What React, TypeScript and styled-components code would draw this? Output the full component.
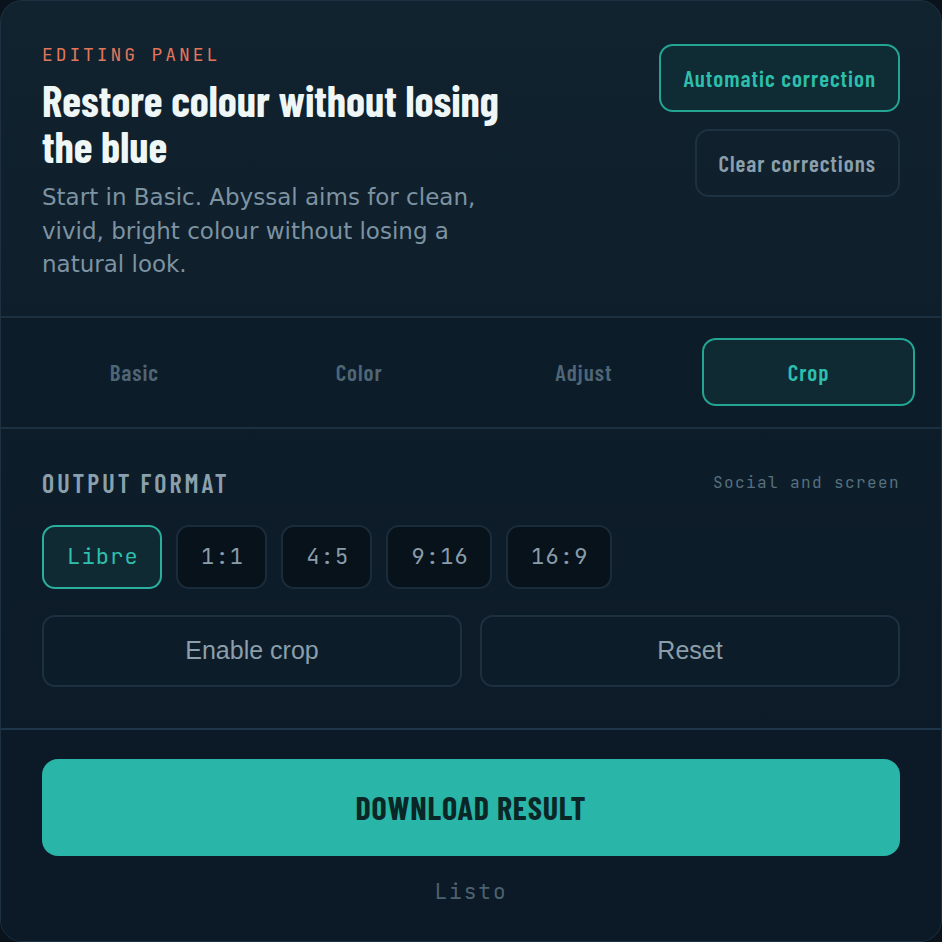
import React, { useState } from 'react';
import styled, { createGlobalStyle } from 'styled-components';

const GlobalStyle = createGlobalStyle`
  html, body {
    margin: 0;
    padding: 0;
    background: #0a121b;
  }
  * { box-sizing: border-box; }
`;

const condensed = `"Barlow Condensed", "Roboto", sans-serif`;
const mono = `"JetBrains Mono", "DejaVu Sans Mono", monospace`;

const Panel = styled.div`
  width: 942px;
  min-height: 942px;
  border: 1px solid #1e3142;
  border-radius: 22px;
  overflow: hidden;
  background: linear-gradient(180deg, #11232f 0%, #0e1d2a 40%, #0c1a27 100%);
  display: flex;
  flex-direction: column;
`;

const Header = styled.header`
  display: flex;
  justify-content: space-between;
  align-items: flex-start;
  padding: 42px 41px 34px 41px;
  border-bottom: 2px solid #1b3141;
`;

const Intro = styled.div`
  max-width: 468px;
  display: flex;
  flex-direction: column;
`;

const Eyebrow = styled.div`
  font-family: ${mono};
  font-size: 18px;
  letter-spacing: 2.9px;
  color: #e2765c;
  text-transform: uppercase;
`;

const Title = styled.h1`
  margin: 11px 0 0 0;
  font-family: ${condensed};
  font-weight: 700;
  font-size: 43px;
  line-height: 46px;
  color: #eef6f6;
`;

const Lead = styled.p`
  margin: 12px 0 0 0;
  font-family: "DejaVu Sans", "Noto Sans", sans-serif;
  font-size: 23px;
  line-height: 33.5px;
  color: #7d93a2;
`;

const Actions = styled.div`
  display: flex;
  flex-direction: column;
  align-items: flex-end;
  gap: 17px;
  padding-top: 1px;
`;

const GhostButton = styled.button<{ $accent?: boolean }>`
  height: 68px;
  padding: 0 22px;
  border-radius: 14px;
  font-family: ${condensed};
  font-weight: 600;
  font-size: 23px;
  letter-spacing: 1px;
  cursor: pointer;
  border: 2px solid ${(p) => (p.$accent ? '#24a493' : '#1d3141')};
  background: ${(p) => (p.$accent ? '#0f2c35' : 'transparent')};
  color: ${(p) => (p.$accent ? '#2dbfac' : '#8a9fab')};
`;

const Tabs = styled.nav`
  display: grid;
  grid-template-columns: repeat(4, 1fr);
  gap: 12px;
  padding: 20px 26px 21px 27px;
  border-bottom: 2px solid #1b3141;
  background: #0d1c29;
`;

const Tab = styled.button<{ $active?: boolean }>`
  height: 68px;
  border-radius: 14px;
  font-family: ${condensed};
  font-weight: 600;
  font-size: 23px;
  letter-spacing: 1px;
  cursor: pointer;
  border: 2px solid ${(p) => (p.$active ? '#24a493' : 'transparent')};
  background: ${(p) => (p.$active ? '#0f2a33' : 'transparent')};
  color: ${(p) => (p.$active ? '#2dbfac' : '#4f6676')};
`;

const Section = styled.section`
  padding: 38px 41px 41px 41px;
  border-bottom: 2px solid #1f364a;
  display: flex;
  flex-direction: column;
`;

const SectionHead = styled.div`
  display: flex;
  justify-content: space-between;
  align-items: center;
`;

const SectionTitle = styled.h2`
  margin: 0;
  font-family: ${condensed};
  font-weight: 600;
  font-size: 26px;
  letter-spacing: 3px;
  color: #8aa0ad;
  text-transform: uppercase;
`;

const SectionHint = styled.span`
  font-family: ${mono};
  font-size: 16px;
  letter-spacing: 1.4px;
  color: #56707f;
`;

const Chips = styled.div`
  display: flex;
  gap: 14px;
  margin-top: 27px;
`;

const Chip = styled.button<{ $active?: boolean }>`
  height: 64px;
  padding: 0 21px 0 23px;
  border-radius: 13px;
  font-family: ${mono};
  font-size: 22px;
  letter-spacing: 1.2px;
  cursor: pointer;
  border: 2px solid ${(p) => (p.$active ? '#2aae9e' : '#1a2c3b')};
  background: ${(p) => (p.$active ? '#0f2a33' : '#08121b')};
  color: ${(p) => (p.$active ? '#2fbfad' : '#899dab')};
`;

const ButtonRow = styled.div`
  display: grid;
  grid-template-columns: 1fr 1fr;
  gap: 18px;
  margin-top: 26px;
`;

const PlainButton = styled.button`
  height: 72px;
  border-radius: 13px;
  border: 2px solid #1d3040;
  background: #0d1c29;
  font-family: "Liberation Sans", Arial, sans-serif;
  font-size: 25px;
  color: #8a9fab;
  cursor: pointer;
`;

const Footer = styled.footer`
  flex: 1;
  padding: 29px 41px 30px 41px;
  display: flex;
  flex-direction: column;
  align-items: center;
  background: #0c1a27;
`;

const DownloadButton = styled.button`
  width: 100%;
  height: 97px;
  border: none;
  border-radius: 16px;
  background: #29b5a7;
  font-family: ${condensed};
  font-weight: 700;
  font-size: 32px;
  letter-spacing: 0.8px;
  color: #0b2626;
  cursor: pointer;
`;

const Status = styled.div`
  margin-top: 22px;
  font-family: ${mono};
  font-size: 21px;
  letter-spacing: 2px;
  color: #4c6270;
`;

const tabs = ['Basic', 'Color', 'Adjust', 'Crop'];
const ratios = ['Libre', '1:1', '4:5', '9:16', '16:9'];

export default function App() {
  const [tab, setTab] = useState('Crop');
  const [ratio, setRatio] = useState('Libre');

  return (
    <>
      <GlobalStyle />
      <Panel>
        <Header>
          <Intro>
            <Eyebrow>Editing panel</Eyebrow>
            <Title>Restore colour without losing the blue</Title>
            <Lead>
              Start in Basic. Abyssal aims for clean, vivid, bright colour without losing a natural look.
            </Lead>
          </Intro>
          <Actions>
            <GhostButton $accent>Automatic correction</GhostButton>
            <GhostButton>Clear corrections</GhostButton>
          </Actions>
        </Header>

        <Tabs>
          {tabs.map((t) => (
            <Tab key={t} $active={t === tab} onClick={() => setTab(t)}>
              {t}
            </Tab>
          ))}
        </Tabs>

        <Section>
          <SectionHead>
            <SectionTitle>Output format</SectionTitle>
            <SectionHint>Social and screen</SectionHint>
          </SectionHead>
          <Chips>
            {ratios.map((r) => (
              <Chip key={r} $active={r === ratio} onClick={() => setRatio(r)}>
                {r}
              </Chip>
            ))}
          </Chips>
          <ButtonRow>
            <PlainButton>Enable crop</PlainButton>
            <PlainButton>Reset</PlainButton>
          </ButtonRow>
        </Section>

        <Footer>
          <DownloadButton>DOWNLOAD RESULT</DownloadButton>
          <Status>Listo</Status>
        </Footer>
      </Panel>
    </>
  );
}
